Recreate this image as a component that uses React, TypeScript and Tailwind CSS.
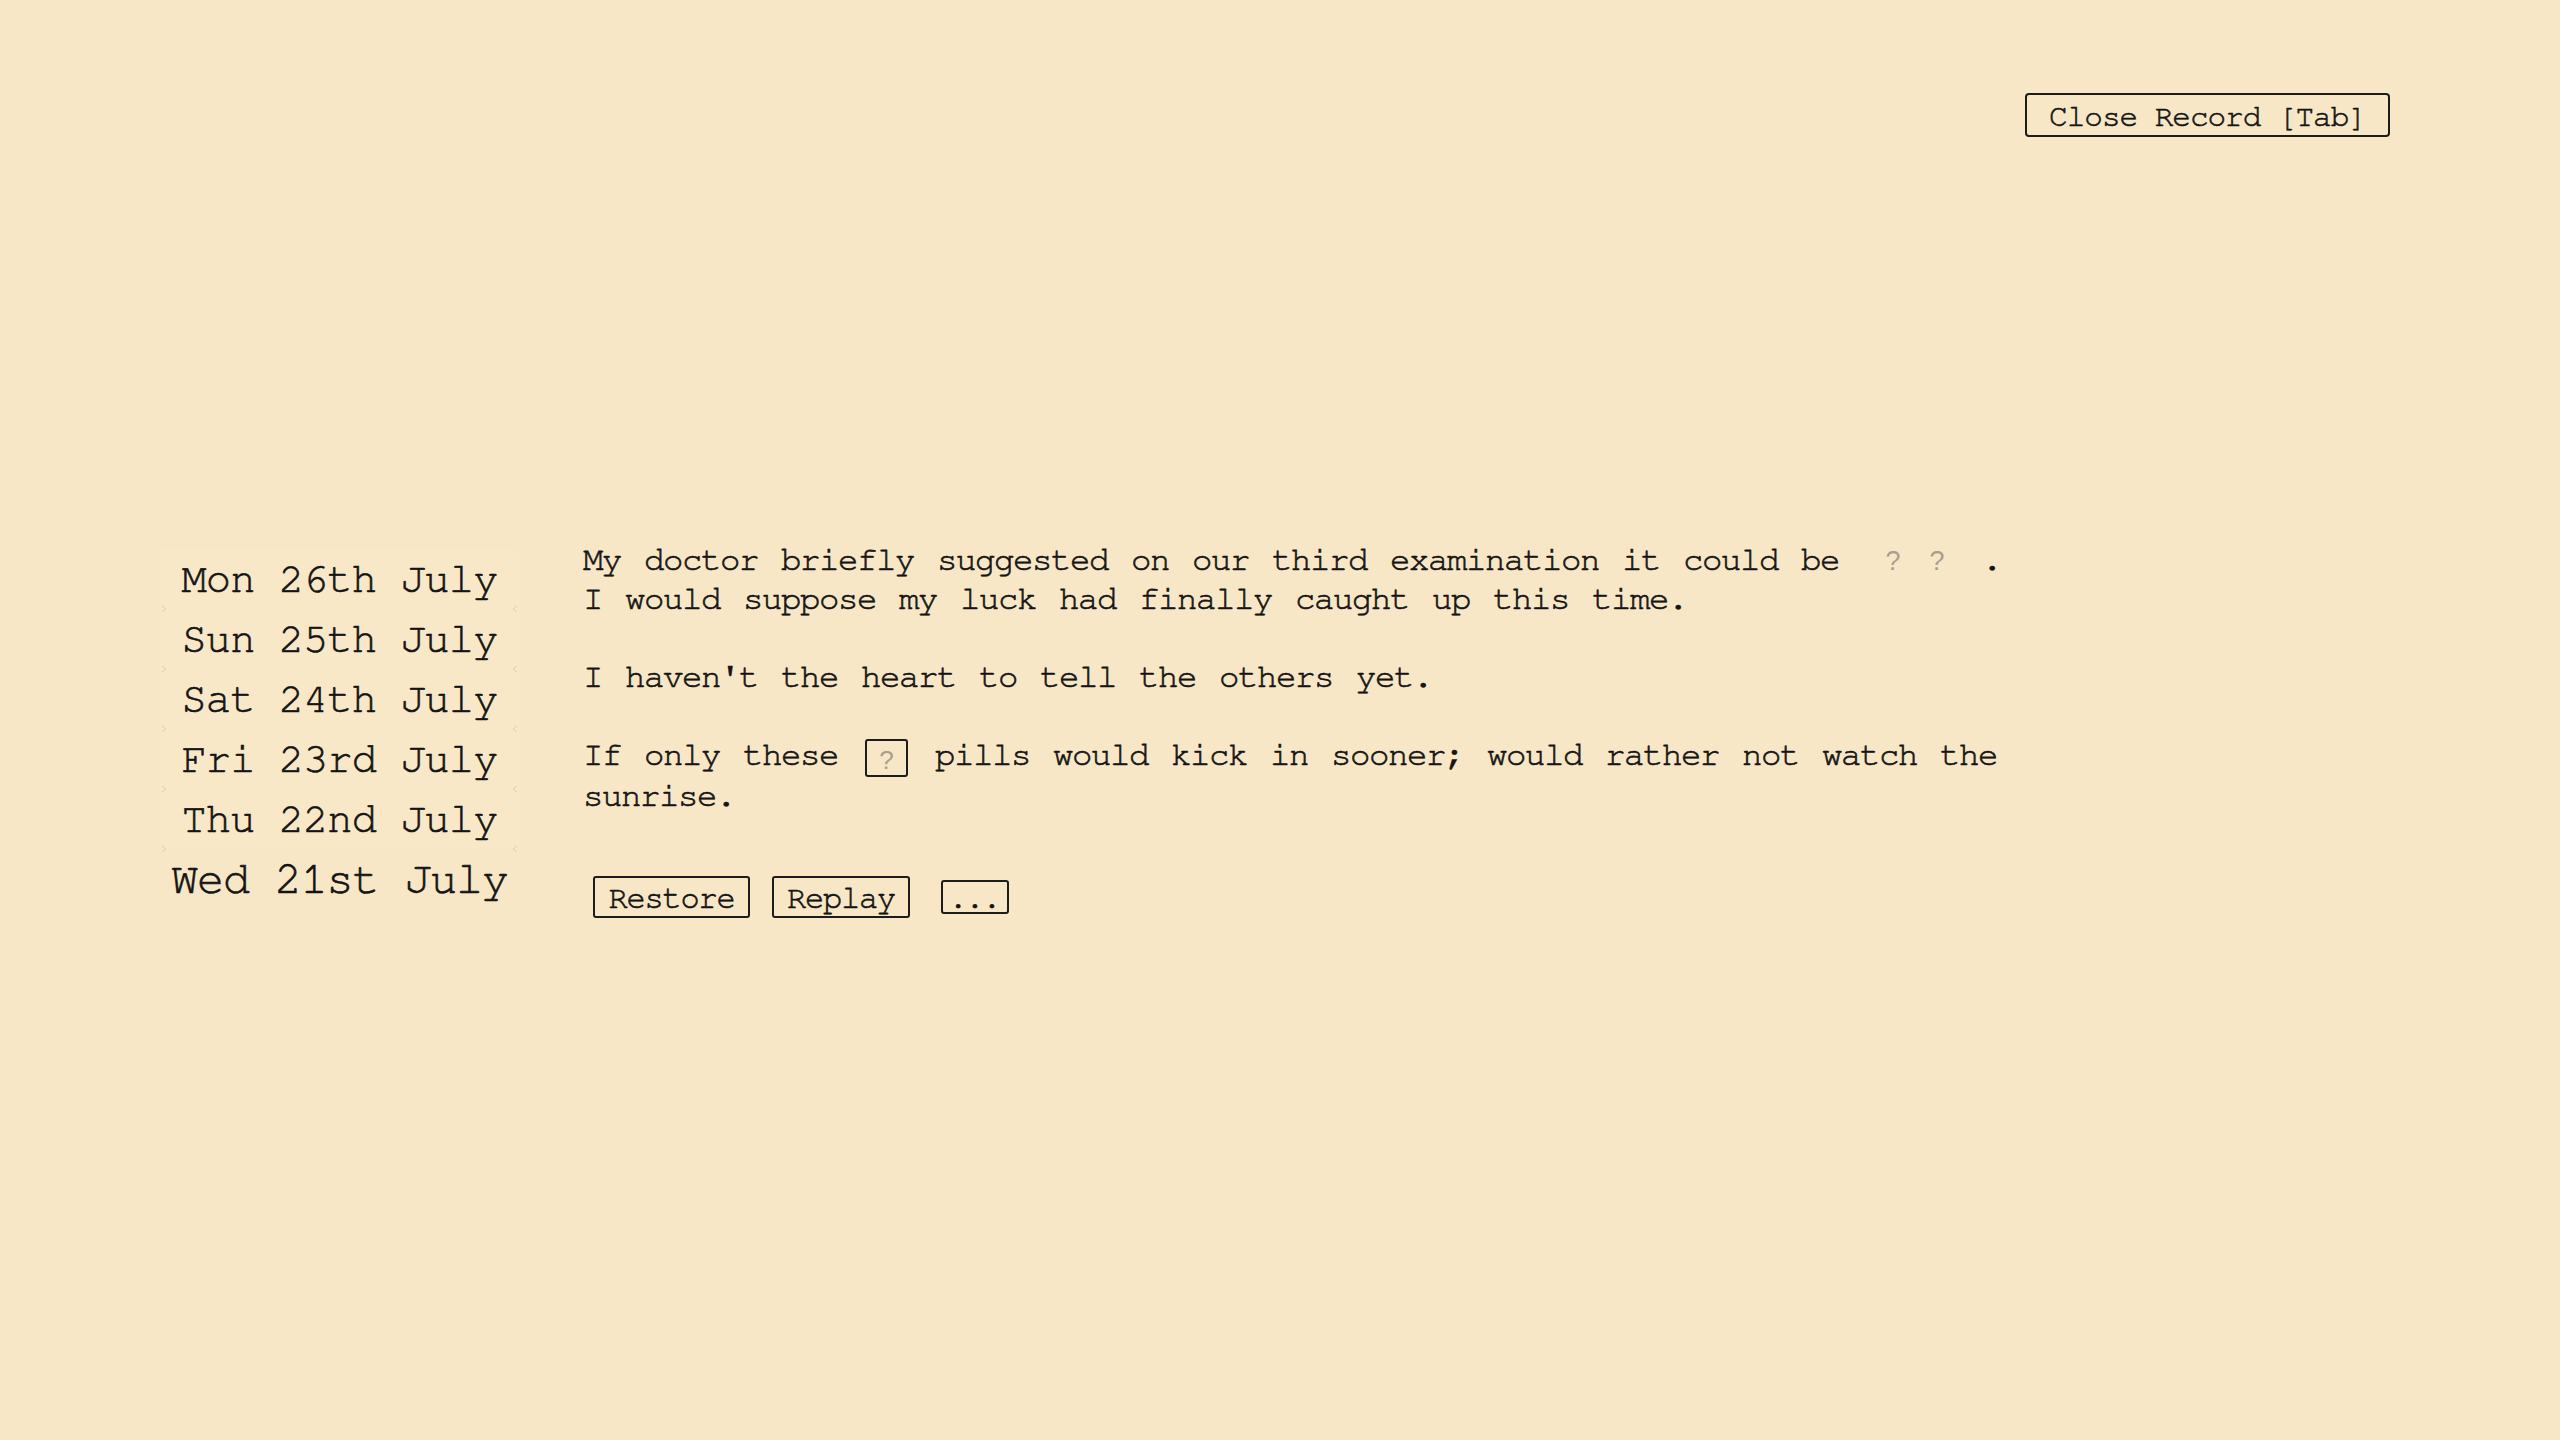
import React from "react";

const days = [
  "Mon 26th July",
  "Sun 25th July",
  "Sat 24th July",
  "Fri 23rd July",
  "Thu 22nd July",
];

function Mark({ side }: { side: "left" | "right" }) {
  // tiny faint notch on the list edges
  return (
    <svg
      width="6"
      height="8"
      viewBox="0 0 6 8"
      className={`absolute -bottom-[4px] ${side === "left" ? "left-[1px]" : "right-[1px] rotate-180"}`}
    >
      <path d="M1 1 L5 4 L1 7" fill="none" stroke="#d9cfbc" strokeWidth="1" />
    </svg>
  );
}

export default function App() {
  return (
    <div className="min-h-screen w-full bg-[#f8e7c6] font-['Nimbus_Mono_PS','Nimbus_Mono_L','FreeMono','Courier_New','Courier','Liberation_Mono',monospace] text-[#141414] [-webkit-text-stroke:0.6px_#141414]">
      {/* Top bar */}
      <div className="flex justify-end pt-[93px] pr-[170px]">
        <button className="flex h-[44px] w-[365px] items-center justify-center rounded-[4px] border-2 border-[#1c1c1c] pt-[3px] text-[31px] leading-none tracking-[-1px]">
          Close Record [Tab]
        </button>
      </div>

      <div className="mt-[404px] flex items-start pl-[160px]">
        {/* Date list */}
        <div className="mt-[8px] flex w-[359px] flex-col">
          <div className="flex flex-col rounded-[3px] bg-[#f8e8c8]">
            {days.map((d) => (
              <div
                key={d}
                className="relative flex h-[60px] items-center justify-center text-[42px] leading-none tracking-[-0.9px]"
              >
                {d}
                <Mark side="left" />
                <Mark side="right" />
              </div>
            ))}
          </div>
          <div className="flex h-[60px] items-center justify-center text-[45px] leading-none tracking-[-1.1px]">
            Wed 21st July
          </div>
        </div>

        {/* Record text */}
        <div className="ml-[64px] flex flex-col">
          <div className="text-[34px] leading-[39px] tracking-[-1.4px] whitespace-nowrap [word-spacing:4px]">
            <p className="mb-[39px]">
              My doctor briefly suggested on our third examination it could be{" "}
              <span className="ml-[17px] inline-block w-[28px] text-center font-['Liberation_Sans',sans-serif] text-[27px] leading-none tracking-normal text-[#aa9f8c] [-webkit-text-stroke:0px]">
                ?
              </span>
              <span className="ml-[16px] inline-block w-[28px] text-center font-['Liberation_Sans',sans-serif] text-[27px] leading-none tracking-normal text-[#aa9f8c] [-webkit-text-stroke:0px]">
                ?
              </span>
              <span className="ml-[31px]">.</span>
              <br />I would suppose my luck had finally caught up this time.
            </p>
            <p className="mb-[39px]">I haven't the heart to tell the others yet.</p>
            <p>
              If only these{" "}
              <span className="mx-[4px] inline-flex h-[38px] w-[43px] items-center justify-center rounded-[3px] border-2 border-[#1c1c1c] pt-[4px] align-middle font-['Liberation_Sans',sans-serif] text-[26px] leading-none tracking-normal text-[#aa9f8c] [-webkit-text-stroke:0px]">
                ?
              </span>{" "}
              pills would kick in sooner; would rather not watch the
              <br />
              sunrise.
            </p>
          </div>

          <div className="mt-[60px] ml-[10px] flex items-center">
            <button className="flex h-[42px] w-[157px] items-center justify-center rounded-[3px] border-2 border-[#1c1c1c] pt-[2px] text-[32px] leading-none tracking-[-1.2px]">
              Restore
            </button>
            <button className="ml-[22px] flex h-[42px] w-[138px] items-center justify-center rounded-[3px] border-2 border-[#1c1c1c] pt-[2px] text-[32px] leading-none tracking-[-1.2px]">
              Replay
            </button>
            <button className="ml-[31px] flex h-[34px] w-[68px] items-center justify-center rounded-[3px] border-2 border-[#1c1c1c] pt-[6px] text-[28px] leading-none">
              ...
            </button>
          </div>
        </div>
      </div>
    </div>
  );
}
